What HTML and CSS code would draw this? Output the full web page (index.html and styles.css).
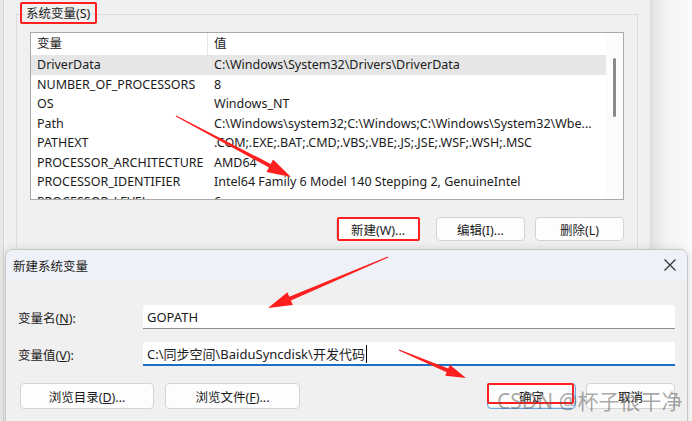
FILE: index.html
```html
<!DOCTYPE html>
<html lang="zh-CN">
<head>
  <meta charset="UTF-8" />
  <title>新建系统变量</title>
  <link rel="stylesheet" href="styles.css">
</head>
<body>
  <div class="desk">
    <div class="envwin">
      <fieldset class="group">
        <legend>系统变量(S)</legend>
        <div class="group-inner">
          <div class="listbox">
            <div class="list">
              <div class="row head"><span class="c1">变量</span><span class="c2">值</span></div>
              <div class="row sel"><span class="c1">DriverData</span><span class="c2">C:\Windows\System32\Drivers\DriverData</span></div>
              <div class="row"><span class="c1">NUMBER_OF_PROCESSORS</span><span class="c2">8</span></div>
              <div class="row"><span class="c1">OS</span><span class="c2">Windows_NT</span></div>
              <div class="row"><span class="c1">Path</span><span class="c2">C:\Windows\system32;C:\Windows;C:\Windows\System32\Wbe...</span></div>
              <div class="row"><span class="c1">PATHEXT</span><span class="c2">.COM;.EXE;.BAT;.CMD;.VBS;.VBE;.JS;.JSE;.WSF;.WSH;.MSC</span></div>
              <div class="row"><span class="c1">PROCESSOR_ARCHITECTURE</span><span class="c2">AMD64</span></div>
              <div class="row"><span class="c1">PROCESSOR_IDENTIFIER</span><span class="c2">Intel64 Family 6 Model 140 Stepping 2, GenuineIntel</span></div>
              <div class="row"><span class="c1">PROCESSOR_LEVEL</span><span class="c2">6</span></div>
            </div>
            <div class="vscroll"><div class="thumb"></div></div>
          </div>
          <div class="btnrow">
            <button class="btn btn-new">新建(W)...</button>
            <button class="btn">编辑(I)...</button>
            <button class="btn">删除(L)</button>
          </div>
        </div>
      </fieldset>
    </div>

    <div class="dialog">
      <div class="titlebar">
        <span>新建系统变量</span>
        <svg class="close" width="12" height="12" viewBox="0 0 12 12">
          <path d="M0.5 0.5 L11.5 11.5 M11.5 0.5 L0.5 11.5" stroke="#333" stroke-width="1.2" fill="none"/>
        </svg>
      </div>
      <div class="dlg-body">
        <div class="form">
          <label>变量名(<u>N</u>):</label>
          <div class="field">GOPATH</div>
          <label>变量值(<u>V</u>):</label>
          <div class="field active"><span class="caret">C:\同步空间\BaiduSyncdisk\开发代码</span></div>
        </div>
        <div class="dlg-buttons">
          <button class="btn wide">浏览目录(<u>D</u>)...</button>
          <button class="btn wide">浏览文件(<u>F</u>)...</button>
          <button class="btn ok">确定</button>
          <button class="btn">取消</button>
        </div>
      </div>
    </div>

    <svg class="marks" width="692" height="421" viewBox="0 0 692 421">
      <g fill="none" stroke="#ff1f1f" stroke-width="2">
        <rect x="21" y="3" width="75" height="20" rx="1"/>
        <rect x="338" y="218" width="81" height="22" rx="1"/>
        <rect x="488" y="384" width="85" height="19" rx="1"/>
      </g>
      <g fill="#ff1f1f">
        <polygon points="175.8,116.4 268.9,167.5 266.5,171.9 291,177 273.1,159.5 270.7,163.9 176.2,115.6"/>
        <polygon points="387.8,256.5 289.3,296.8 287.4,292.2 268,308 292.8,305.0 290.9,300.4 388.2,257.5"/>
        <polygon points="398.8,350.5 446.7,372.2 445.2,375.8 466,378 449.8,364.8 448.3,368.5 399.2,349.5"/>
      </g>
    </svg>

    <div class="watermark">CSDN @杯子很干净</div>
  </div>
</body>
</html>
```

FILE: styles.css
```css
* { box-sizing: border-box; }
body {
  margin: 0;
  font-family: "Noto Sans", "Noto Sans CJK SC", sans-serif;
  color: #1b1b1b;
}
.desk {
  position: relative;
  width: 692px; height: 421px; overflow: hidden;
  background: linear-gradient(90deg, #f0f0f0 0, #f0f0f0 650px, #e2e2e2 651px, #f4f4f4 666px, #fbfbfb 692px);
}

/* back window */
.envwin {
  width: 651px; height: 421px;
  padding: 4px 0 0 16px;
  background: linear-gradient(90deg, #e8e8e8 0 3px, #d6d6d6 3px 4px, #f0f0f0 4px);
  border-right: 1px solid #dadada;
}
.group {
  margin: 0; padding: 0;
  width: 621px; height: 280px;
  border: 1px solid #dcdcdc;
}
.group legend {
  margin-left: 7px; padding: 0 2px;
  font-size: 12.5px; line-height: 20px;
}
.group-inner { padding: 8px 13px 0 13px; }
.listbox {
  display: flex;
  width: 594px; height: 168px;
  background: #fff;
  border: 1px solid #a9a9a9;
}
.list { width: 575px; overflow: hidden; font-size: 12.5px; }
.row { display: flex; height: 19.5px; line-height: 19.5px; white-space: nowrap; }
.row.head { height: 22px; line-height: 22px; }
.row.sel { background: #e6e6e6; }
.c1 { width: 177px; padding-left: 6px; flex: none; overflow: hidden; }
.c2 { padding-left: 6px; }
.head .c1 { border-right: 1px solid #e5e5e5; }
.vscroll { flex: 1; position: relative; background: #fcfcfc; }
.thumb {
  margin: 25px 0 0 7px;
  width: 3px; height: 59px;
  background: #8a8a8a; border-radius: 2px;
}
.btnrow { display: flex; justify-content: flex-end; gap: 10px; margin-top: 17px; }
.btn {
  height: 24px;
  font-family: inherit; font-size: 12.5px; color: #1b1b1b;
  background: #fdfdfd;
  border: 1px solid #d3d3d3; border-radius: 4px;
  padding: 0;
}
.btnrow .btn { width: 89px; }
.btnrow .btn-new { width: 84px; margin-right: 6px; }

/* dialog window */
.dialog {
  position: absolute; left: 5px; top: 249px;
  width: 683px; height: 190px;
  background: #f0f0f0;
  border: 1px solid #c6c6c6; border-radius: 8px 8px 0 0;
  box-shadow: 0 0 8px rgba(0,0,0,0.12);
  overflow: hidden;
}
.titlebar {
  height: 30px;
  display: flex; align-items: center; justify-content: space-between;
  padding: 0 11px 0 7px;
  background: #eef1f8;
  font-size: 12.5px;
}
.dlg-body { padding: 25px 12px 0 12px; }
.form {
  display: grid;
  grid-template-columns: 125px 532px;
  row-gap: 13px;
  align-items: center;
  font-size: 12.5px;
}
.field {
  height: 24px; line-height: 24px;
  padding-left: 4px;
  font-size: 13px;
  background: #fff;
  border-bottom: 1px solid #8d8d8d;
  border-radius: 3px 3px 0 0;
  white-space: nowrap;
}
.field.active { border-bottom: 2px solid #1a6fc4; }
.caret { border-right: 1px solid #000; padding-right: 1px; }
.dlg-buttons { display: flex; margin-top: 17px; padding-left: 2px; }
.dlg-buttons .btn { height: 26px; width: 89px; }
.dlg-buttons .btn.wide { width: 134px; margin-right: 11px; }
.dlg-buttons .btn.wide + .btn.wide { width: 135px; }
.dlg-buttons .ok {
  margin-left: auto; margin-right: 10px;
  border: 1px solid #6aa6e0;
  box-shadow: inset 0 0 0 1px #d7e8f8;
}

/* annotations */
.marks { position: absolute; left: 0; top: 0; pointer-events: none; }
.watermark {
  position: absolute; left: 497px; top: 387px;
  font-family: "Noto Sans", "Noto Sans CJK SC", sans-serif;
  font-size: 21px; line-height: 28px;
  color: rgba(95,95,95,0.55);
  white-space: nowrap;
}
```
